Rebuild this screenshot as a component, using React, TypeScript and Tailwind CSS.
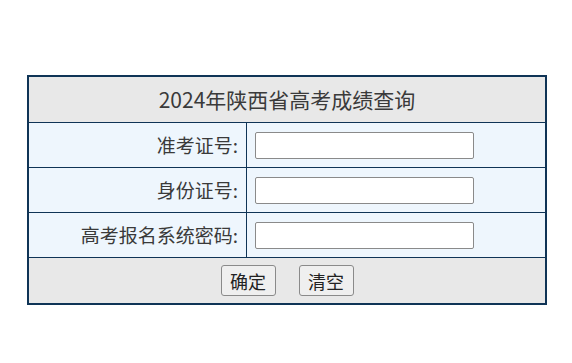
import React, { useState } from 'react';

const font = { fontFamily: '"Microsoft YaHei", "Noto Sans CJK SC", "Noto Sans", sans-serif' };

const fields = [
  { key: 'ksh', label: '准考证号:' },
  { key: 'sfzh', label: '身份证号:' },
  { key: 'mm', label: '高考报名系统密码:' },
];

export default function App() {
  const [values, setValues] = useState<Record<string, string>>({});

  return (
    <div className="w-[572px] h-[363px] bg-white pt-[75px] pl-[27px]" style={font}>
      <div className="w-[520px] border-2 border-[#0f3456] text-[#3a3a3a]">
        {/* 标题 */}
        <div className="h-[46px] bg-[#e8e8e8] flex items-center justify-center text-[21px] border-b border-[#0f3456]">
          2024年陕西省高考成绩查询
        </div>

        {fields.map((f) => (
          <div key={f.key} className="h-[45px] flex bg-[#eef6fd] border-b border-[#0f3456]">
            <div className="w-[218px] border-r border-[#0f3456] flex items-center justify-end pr-[8px] text-[19px]">
              {f.label}
            </div>
            <div className="flex-1 flex items-center pl-[8px]">
              <input
                type={f.key === 'mm' ? 'password' : 'text'}
                value={values[f.key] || ''}
                onChange={(e) => setValues({ ...values, [f.key]: e.target.value })}
                className="w-[219px] h-[27px] bg-white border border-[#8a8a8a] rounded-[2px] outline-none px-1 text-[14px]"
              />
            </div>
          </div>
        ))}

        {/* 按钮 */}
        <div className="h-[45px] bg-[#e8e8e8] flex items-center justify-center gap-[23px]">
          <button className="w-[55px] h-[31px] bg-[#efefef] border border-[#8a8a8a] rounded-[3px] text-[18px] text-[#222] leading-none">
            确定
          </button>
          <button
            onClick={() => setValues({})}
            className="w-[55px] h-[31px] bg-[#efefef] border border-[#8a8a8a] rounded-[3px] text-[18px] text-[#222] leading-none"
          >
            清空
          </button>
        </div>
      </div>
    </div>
  );
}
